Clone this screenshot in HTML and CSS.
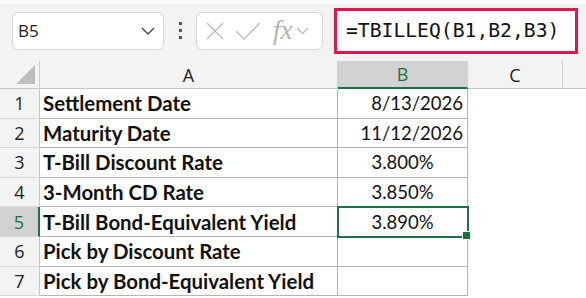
FILE: index.html
```html
<!DOCTYPE html>
<html>
<head>
    <title>TBILLEQ</title>
    <link rel="stylesheet" href="styles.css">
</head>
<body>
    <div class="toolbar">
        <div class="name-box">
            <span>B5</span>
            <svg class="chev" width="14" height="8" viewBox="0 0 14 8"><path d="M1 1 L7 7 L13 1" fill="none" stroke="#444" stroke-width="1.4"/></svg>
        </div>
        <div class="dots"><i></i><i></i><i></i></div>
        <div class="fn-box">
            <svg width="20" height="20" viewBox="0 0 20 20"><path d="M2 2 L18 18 M18 2 L2 18" stroke="#bcbcbc" stroke-width="1.4"/></svg>
            <svg width="26" height="20" viewBox="0 0 26 20"><path d="M1 10 L9 18 L25 2" fill="none" stroke="#bcbcbc" stroke-width="1.4"/></svg>
            <span class="fx">fx</span>
            <svg width="13" height="8" viewBox="0 0 13 8"><path d="M1 1 L6.5 6.5 L12 1" fill="none" stroke="#bcbcbc" stroke-width="1.4"/></svg>
        </div>
        <div class="formula">=TBILLEQ(B1,B2,B3)</div>
    </div>

    <div class="sheet">
        <div class="hd corner"><span class="tri"></span></div>
        <div class="hd">A</div>
        <div class="hd sel-col">B</div>
        <div class="hd">C</div>
        <div class="hd last"></div>

        <div class="rh">1</div>
        <div class="cell lbl">Settlement Date</div>
        <div class="cell num">8/13/2026</div>
        <div class="cell blank"></div>
        <div class="cell blank"></div>

        <div class="rh">2</div>
        <div class="cell lbl">Maturity Date</div>
        <div class="cell num">11/12/2026</div>
        <div class="cell blank"></div>
        <div class="cell blank"></div>

        <div class="rh">3</div>
        <div class="cell lbl">T-Bill Discount Rate</div>
        <div class="cell pct">3.800%</div>
        <div class="cell blank"></div>
        <div class="cell blank"></div>

        <div class="rh">4</div>
        <div class="cell lbl">3-Month CD Rate</div>
        <div class="cell pct">3.850%</div>
        <div class="cell blank"></div>
        <div class="cell blank"></div>

        <div class="rh sel-row">5</div>
        <div class="cell lbl">T-Bill Bond-Equivalent Yield</div>
        <div class="cell pct active">3.890%<span class="handle"></span></div>
        <div class="cell blank"></div>
        <div class="cell blank"></div>

        <div class="rh">6</div>
        <div class="cell lbl">Pick by Discount Rate</div>
        <div class="cell pct"></div>
        <div class="cell blank"></div>
        <div class="cell blank"></div>

        <div class="rh">7</div>
        <div class="cell lbl">Pick by Bond-Equivalent Yield</div>
        <div class="cell pct"></div>
        <div class="cell blank"></div>
        <div class="cell blank"></div>
    </div>
</body>
</html>
```

FILE: styles.css
```css
* { box-sizing: border-box; }
body { margin: 0; background: #fff; font-family: "Open Sans", "Noto Sans", sans-serif; overflow: hidden; }

.toolbar {
    height: 61px;
    background: #f3f3f3;
    border-top: 4px solid #fafafa;
    display: flex;
    align-items: center;
    padding-left: 12px;
}
.name-box {
    width: 152px;
    height: 38px;
    background: #fff;
    border: 1px solid #d6d6d6;
    border-radius: 6px;
    display: flex;
    align-items: center;
    justify-content: space-between;
    padding: 0 8px 0 5px;
    font-size: 17px;
    color: #222;
    margin-top: -4px;
}
.dots {
    width: 32px;
    display: flex;
    flex-direction: column;
    align-items: center;
    gap: 4px;
    margin-top: -4px;
}
.dots i { width: 3px; height: 3px; background: #555; display: block; }
.fn-box {
    width: 127px;
    height: 38px;
    background: #fff;
    border: 1px solid #d6d6d6;
    border-radius: 6px;
    display: flex;
    align-items: center;
    padding: 0 4px 0 8px;
    gap: 10px;
    margin-top: -4px;
}
.fx {
    font-family: "Liberation Serif", serif;
    font-style: italic;
    font-size: 27px;
    line-height: 1;
    color: #b4b4b4;
    margin-left: 2px;
    margin-right: -7px;
}
.formula {
    margin-left: 11px;
    width: 244px;
    height: 46px;
    border: 3px solid #e0174a;
    background: #fff;
    font-family: "DejaVu Sans Mono", monospace;
    font-size: 19.7px;
    color: #111;
    display: flex;
    align-items: center;
    padding-left: 9px;
    margin-top: -4px;
}

.sheet {
    display: grid;
    grid-template-columns: 40px 298px 130px 95px 1fr;
    grid-template-rows: 28px repeat(7, 29.6px);
}
.hd {
    background: #f3f3f3;
    border-right: 1px solid #cfcfcf;
    border-bottom: 1px solid #c6c6c6;
    display: flex;
    align-items: center;
    justify-content: center;
    font-size: 18px;
    color: #222;
}
.hd.last { border-right: none; }
.corner { position: relative; }
.tri {
    position: absolute;
    right: 4px;
    bottom: 4px;
    width: 0;
    height: 0;
    border-left: 19px solid transparent;
    border-bottom: 19px solid #bfbfbf;
}
.sel-col {
    background: #d2d2d2;
    color: #1e7145;
    border-bottom: 2px solid #1e7145;
}
.rh {
    background: #f3f3f3;
    border-right: 1px solid #c6c6c6;
    border-bottom: 1px solid #d8d8d8;
    display: flex;
    align-items: center;
    justify-content: center;
    font-size: 18px;
    color: #222;
}
.sel-row {
    background: #d2d2d2;
    color: #1e7145;
    border-right: 2px solid #1e7145;
}
.cell {
    border-right: 1px solid #b4b4b4;
    border-bottom: 1px solid #b4b4b4;
    display: flex;
    align-items: center;
    font-family: Lato, "Open Sans", sans-serif;
    font-size: 18.5px;
    color: #111;
    white-space: nowrap;
    overflow: hidden;
}
.lbl { font-weight: bold; padding-left: 3px; font-size: 20.4px; }
.num { justify-content: flex-end; padding-right: 4px; }
.pct { justify-content: center; }
.blank { border: none; }
.active {
    position: relative;
    overflow: visible;
    outline: 2px solid #1e7145;
    outline-offset: -1px;
}
.handle {
    position: absolute;
    right: -4px;
    bottom: -4px;
    width: 7px;
    height: 7px;
    background: #1e7145;
    border: 1px solid #fff;
    box-sizing: content-box;
}
```
